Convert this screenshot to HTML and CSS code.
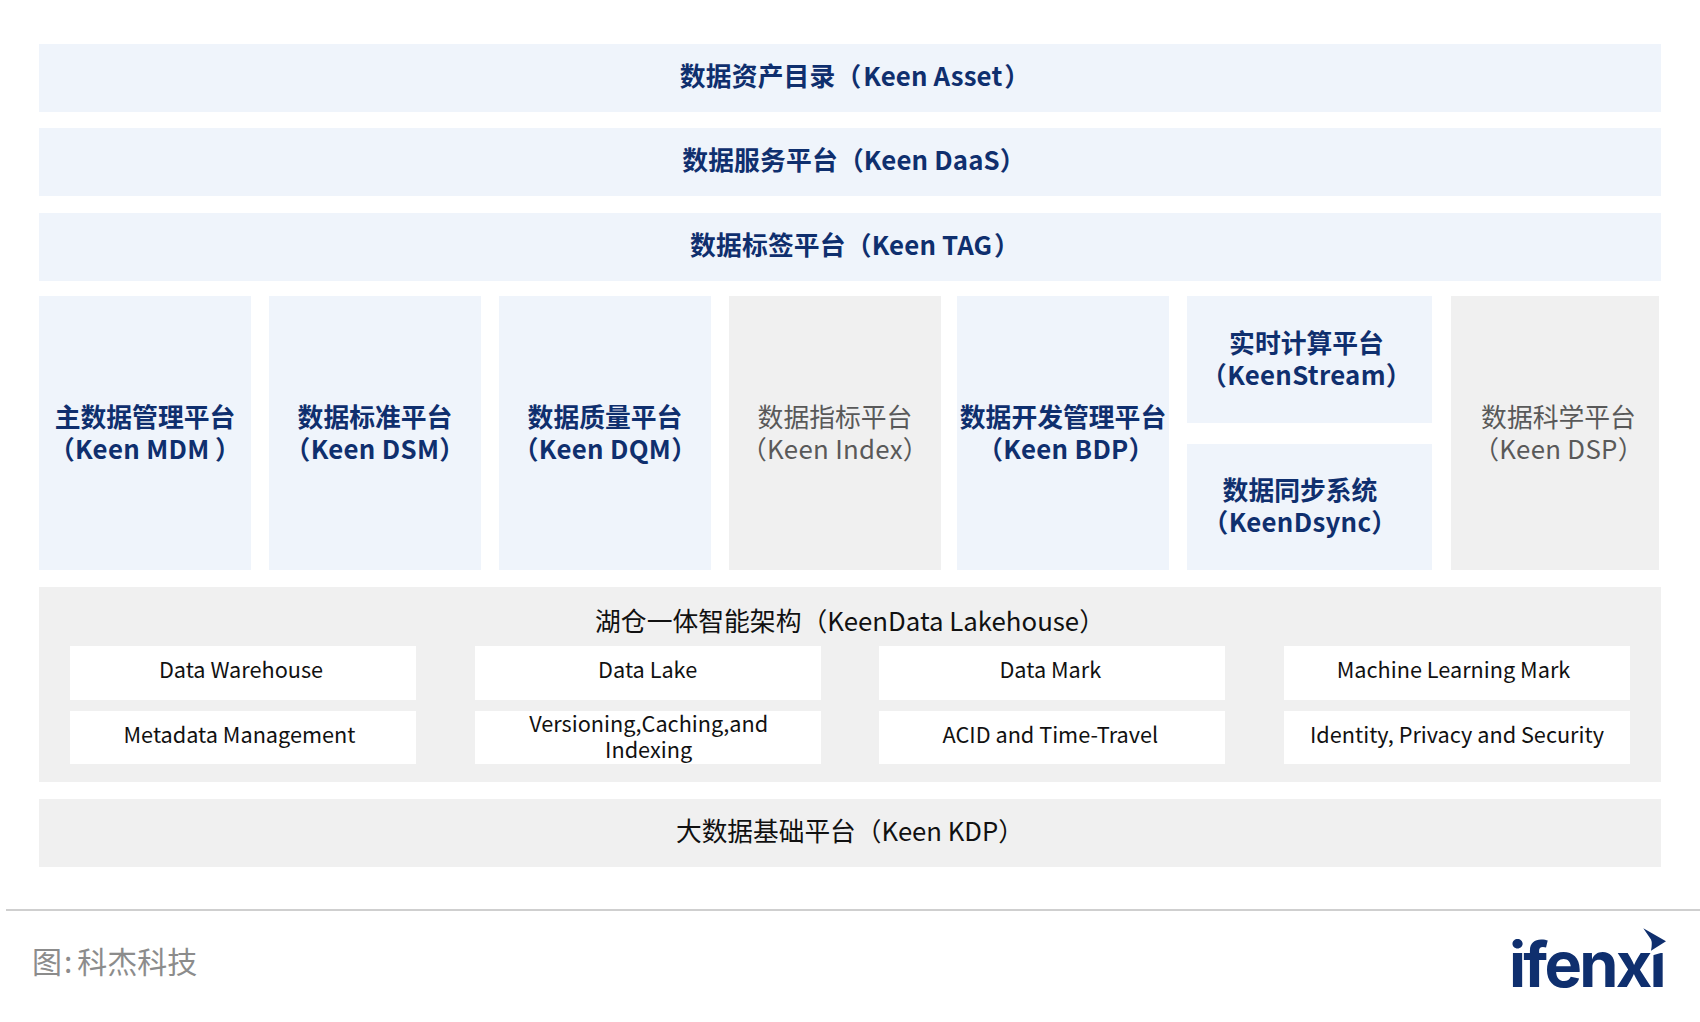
FILE: index.html
```html
<!DOCTYPE html>
<html lang="zh-CN">
<head>
<meta charset="utf-8">
<title>Keen 数据架构</title>
<link rel="stylesheet" href="styles.css">
</head>
<body>
<main class="board">
  <div class="band band-first">数据资产目录（&#8202;Keen Asset&#8202;）</div>
  <div class="band band-second">数据服务平台（Keen DaaS）</div>
  <div class="band band-third">数据标签平台（Keen TAG&#8202;）</div>
  <div class="columns">
    <div class="col tile-blue"><p class="label">主数据管理平台<br><span class="en">（Keen MDM&#8201;）</span></p></div>
    <div class="col tile-blue"><p class="label">数据标准平台<br><span class="en">（Keen DSM）</span></p></div>
    <div class="col tile-blue"><p class="label">数据质量平台<br><span class="en">（Keen DQM）</span></p></div>
    <div class="col tile-gray"><p class="label">数据指标平台<br><span class="en">（Keen Index）</span></p></div>
    <div class="col tile-blue col-bdp"><p class="label">数据开发管理平台<br><span class="en en-bdp">（Keen BDP）</span></p></div>
    <div class="stack">
      <div class="stack-top tile-blue"><p class="label">实时计算平台<br><span class="en">（KeenStream）</span></p></div>
      <div class="stack-bottom tile-blue"><p class="label">数据同步系统<br><span class="en">（KeenDsync）</span></p></div>
    </div>
    <div class="col tile-gray col-dsp"><p class="label">数据科学平台<br><span class="en">（Keen DSP）</span></p></div>
  </div>
  <section class="lake">
    <h2 class="lake-title">湖仓一体智能架构（KeenData Lakehouse）</h2>
    <div class="lake-grid">
      <div class="cell nudge-s">Data Warehouse</div>
      <div class="cell">Data Lake</div>
      <div class="cell nudge-s">Data Mark</div>
      <div class="cell nudge-m">Machine Learning Mark</div>
      <div class="cell nudge-m">Metadata Management</div>
      <div class="cell cell-wrap">Versioning,Caching,and<br>Indexing</div>
      <div class="cell nudge-s">ACID and Time-Travel</div>
      <div class="cell">Identity, Privacy and Security</div>
    </div>
  </section>
  <div class="band-base">大数据基础平台（Keen KDP）</div>
</main>
<footer class="foot">
  <div class="credit">图<span class="colon">:</span>科杰科技</div>
  <div class="logo">
    <span class="logo-text">ifenxı</span>
    <svg class="logo-mark" width="40" height="50" viewBox="0 0 40 50" aria-hidden="true">
      <polygon class="logo-cut" points="22,21 36,21 36,23.5 22,27.5"/>
      <path class="logo-arrow" d="M13.3 0.3 L36 13.3 L21 22.7 Q22.5 15 21 11.5 Z"/>
    </svg>
  </div>
</footer>
</body>
</html>
```
FILE: styles.css
```css
* { box-sizing: border-box; }
html, body { margin: 0; padding: 0; background: #fff; }
body {
  width: 1700px;
  height: 1022px;
  overflow: hidden;
  font-family: "Noto Sans CJK SC", "Noto Sans", sans-serif;
}
.board {
  display: flex;
  flex-direction: column;
  width: 1622px;
  margin-left: 39px;
  padding-top: 44px;
}
.band {
  height: 68px;
  padding-bottom: 7px;
  display: flex;
  align-items: center;
  justify-content: center;
  font-size: 25.8px;
  font-weight: 700;
  letter-spacing: 0.15px;
  color: #0f2f6e;
  background: #eff4fb;
}
.band-first { margin-bottom: 16px; padding-left: 10px; }
.band-second { margin-bottom: 17px; padding-left: 8px; }
.band-third { margin-bottom: 15px; padding-left: 10px; }
.columns {
  display: flex;
  gap: 18px;
  height: 274px;
  margin-bottom: 17px;
  font-size: 25.8px;
  line-height: 32px;
  text-align: center;
}
.label { margin: 0 0 3px; }
.en { letter-spacing: 0.3px; }
.en-bdp { padding-left: 6px; }
.col {
  width: 212px;
  display: flex;
  align-items: center;
  justify-content: center;
}
.col-bdp { margin-left: -2px; }
.col-dsp { width: 208px; margin-left: 1px; padding-left: 7px; }
.tile-blue { background: #eff4fb; color: #0f2f6e; font-weight: 700; }
.tile-gray { background: #f0f0f0; color: #595959; font-weight: 400; }
.stack {
  width: 245px;
  display: flex;
  flex-direction: column;
  gap: 21px;
}
.stack-top, .stack-bottom {
  flex: 1;
  display: flex;
  align-items: center;
  justify-content: center;
}
.stack-top { padding-right: 6px; }
.stack-bottom { padding-right: 19px; }
.lake {
  height: 195px;
  margin-bottom: 17px;
  padding: 16px 31px 0;
  background: #f0f0f0;
}
.lake-title {
  margin: 0 0 11px;
  height: 32px;
  padding-top: 1px;
  font-size: 25.8px;
  line-height: 32px;
  font-weight: 400;
  text-align: center;
  color: #111;
}
.lake-grid {
  display: grid;
  grid-template-columns: repeat(4, 346px);
  grid-template-rows: 54px 53px;
  justify-content: space-between;
  row-gap: 11px;
}
.cell {
  display: flex;
  align-items: center;
  justify-content: center;
  padding-bottom: 8px;
  background: #fff;
  font-size: 21.7px;
  line-height: 26px;
  text-align: center;
  color: #111;
}
.nudge-s { padding-right: 4px; }
.nudge-m { padding-right: 7px; }
.cell-wrap { padding: 0 0 3px 2px; }
.band-base {
  height: 68px;
  padding-bottom: 8px;
  display: flex;
  align-items: center;
  justify-content: center;
  font-size: 25.7px;
  color: #111;
  background: #f0f0f0;
}
.foot {
  display: flex;
  justify-content: space-between;
  margin: 42px 0 0 6px;
  border-top: 2px solid #cfcfcf;
  padding: 0 37px 0 26px;
}
.credit {
  margin-top: 27px;
  font-size: 30px;
  line-height: 44px;
  color: #8c8c8c;
}
.colon { padding: 0 5px 0 2px; }
.logo {
  position: relative;
  width: 154px;
  height: 70px;
  margin-top: 15px;
}
.logo-text {
  font-family: "Inter", sans-serif;
  font-weight: 700;
  font-size: 63px;
  line-height: 76px;
  letter-spacing: -2.7px;
  color: #0f2f6e;
}
.logo-mark {
  position: absolute;
  top: 2px;
  right: -7px;
}
.logo-cut { fill: #fff; }
.logo-arrow { fill: #0f2f6e; }
```
